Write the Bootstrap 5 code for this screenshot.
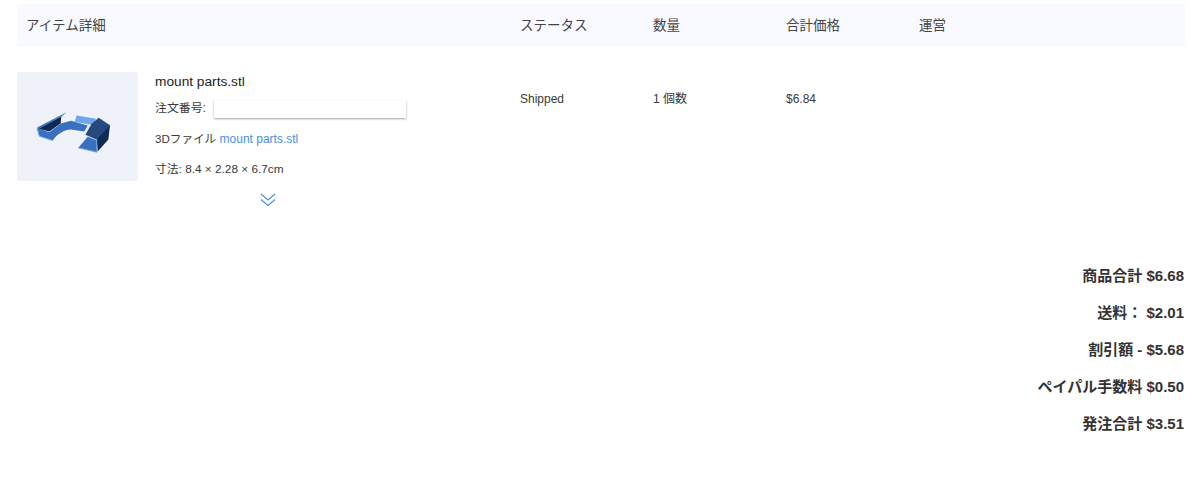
<!DOCTYPE html>
<html lang="ja">
<head>
<meta charset="utf-8">
<title>注文詳細</title>
<link href="https://cdn.jsdelivr.net/npm/bootstrap@5.3.0/dist/css/bootstrap.min.css" rel="stylesheet">
<style>
html,body{height:501px;overflow:hidden;background:#fff}
body{font-family:"Liberation Sans","Noto Sans CJK JP",sans-serif;color:#333;padding:4px 15px 0 17px}
.head-bar{height:43px;background:#f9faff;font-size:13.5px;color:#444;padding:2px 0 0 9px}
.cell-main{width:494px}
.cell-mid{width:133px}
.item-row{margin-top:25px;font-size:12px;color:#3a3a3a}
.thumb-box{width:121px;height:109px;background:#eff2f8;border-radius:3px;padding:12px 8px 0 0}
.item-info{margin-left:17px;width:251px}
.item-name{font-size:13.7px;color:#222;line-height:20px}
.order-line{height:20px;margin-top:6px;line-height:20px;font-size:11.9px}
.order-input{width:192px;height:18px;margin:2px 0 0 8px;background:#fff;border:0;padding:0;box-shadow:0 1px 2px rgba(0,0,0,.35)}
.file-line{margin-top:11px;line-height:20px}
.file-label{font-size:11.6px}
.file-line a{color:#4a90e2;text-decoration:none}
.size-line{margin-top:10px;line-height:20px;font-size:11.8px}
.more-btn{margin-top:14px;line-height:0;width:226px}
.status-cell{padding-top:17px;line-height:20px;font-size:12px}
.status-first{margin-left:114px;width:133px}
.sum-box{margin-top:50px;font-size:15px;font-weight:700;color:#333;text-align:right;padding-right:1px}
.sum-box div{height:37px;line-height:37px}
</style>
</head>
<body>
<div class="head-bar d-flex align-items-center">
  <div class="cell-main">アイテム詳細</div>
  <div class="cell-mid">ステータス</div>
  <div class="cell-mid">数量</div>
  <div class="cell-mid">合計価格</div>
  <div class="cell-mid">運営</div>
</div>
<div class="item-row d-flex">
  <div class="thumb-box d-flex align-items-center justify-content-center flex-shrink-0">
    <svg width="75" height="43" viewBox="110 155 225 128">
      <path d="M118 206 L186 170 L184 192 L150 216 L118 208Z" fill="#0f2a52"/>
      <path d="M113 204 L202 158 L186 172 L120 207Z" fill="#3f78c8"/>
      <path d="M113 205 L120 230 L160 243 C175 222 195 210 215 210 L255 216 L265 198 L215 184 L185 192 L150 218 Z" fill="#3a70c0"/>
      <path d="M113 205 L120 230 L160 243" fill="none" stroke="#6aa6ef" stroke-width="3"/>
      <path d="M232 168 L290 178 L283 197 L226 187Z" fill="#6ea7ee"/>
      <path d="M298 175 L332 197 L322 225 L291 240 L258 226 L277 193Z" fill="#24497f"/>
      <path d="M332 197 L327 240 L295 276 L292 240 Z" fill="#102c56"/>
      <path d="M265 232 L292 242 L293 278 L237 265Z" fill="#3a70c0"/>
      <path d="M237 265 L293 278 L292 240" fill="none" stroke="#6aa6ef" stroke-width="3"/>
    </svg>
  </div>
  <div class="item-info flex-shrink-0">
    <div class="item-name">mount parts.stl</div>
    <div class="order-line d-flex">注文番号:<div class="order-input"></div></div>
    <div class="file-line"><span class="file-label">3Dファイル</span> <a href="#">mount parts.stl</a></div>
    <div class="size-line">寸法: 8.4 × 2.28 × 6.7cm</div>
    <div class="more-btn text-center">
      <svg width="16" height="14" viewBox="0 0 16 14" fill="none" stroke="#4a90e2" stroke-width="1.2"><path d="M1 1 L8 7 L15 1"/><path d="M1 6.5 L8 12.5 L15 6.5"/></svg>
    </div>
  </div>
  <div class="status-cell status-first flex-shrink-0">Shipped</div>
  <div class="status-cell cell-mid flex-shrink-0">1 個数</div>
  <div class="status-cell cell-mid flex-shrink-0">$6.84</div>
</div>
<div class="sum-box">
  <div>商品合計 $6.68</div>
  <div>送料：&nbsp;$2.01</div>
  <div>割引額 - $5.68</div>
  <div>ペイパル手数料 $0.50</div>
  <div>発注合計 $3.51</div>
</div>
<script src="https://cdn.jsdelivr.net/npm/bootstrap@5.3.0/dist/js/bootstrap.bundle.min.js"></script>
</body>
</html>
